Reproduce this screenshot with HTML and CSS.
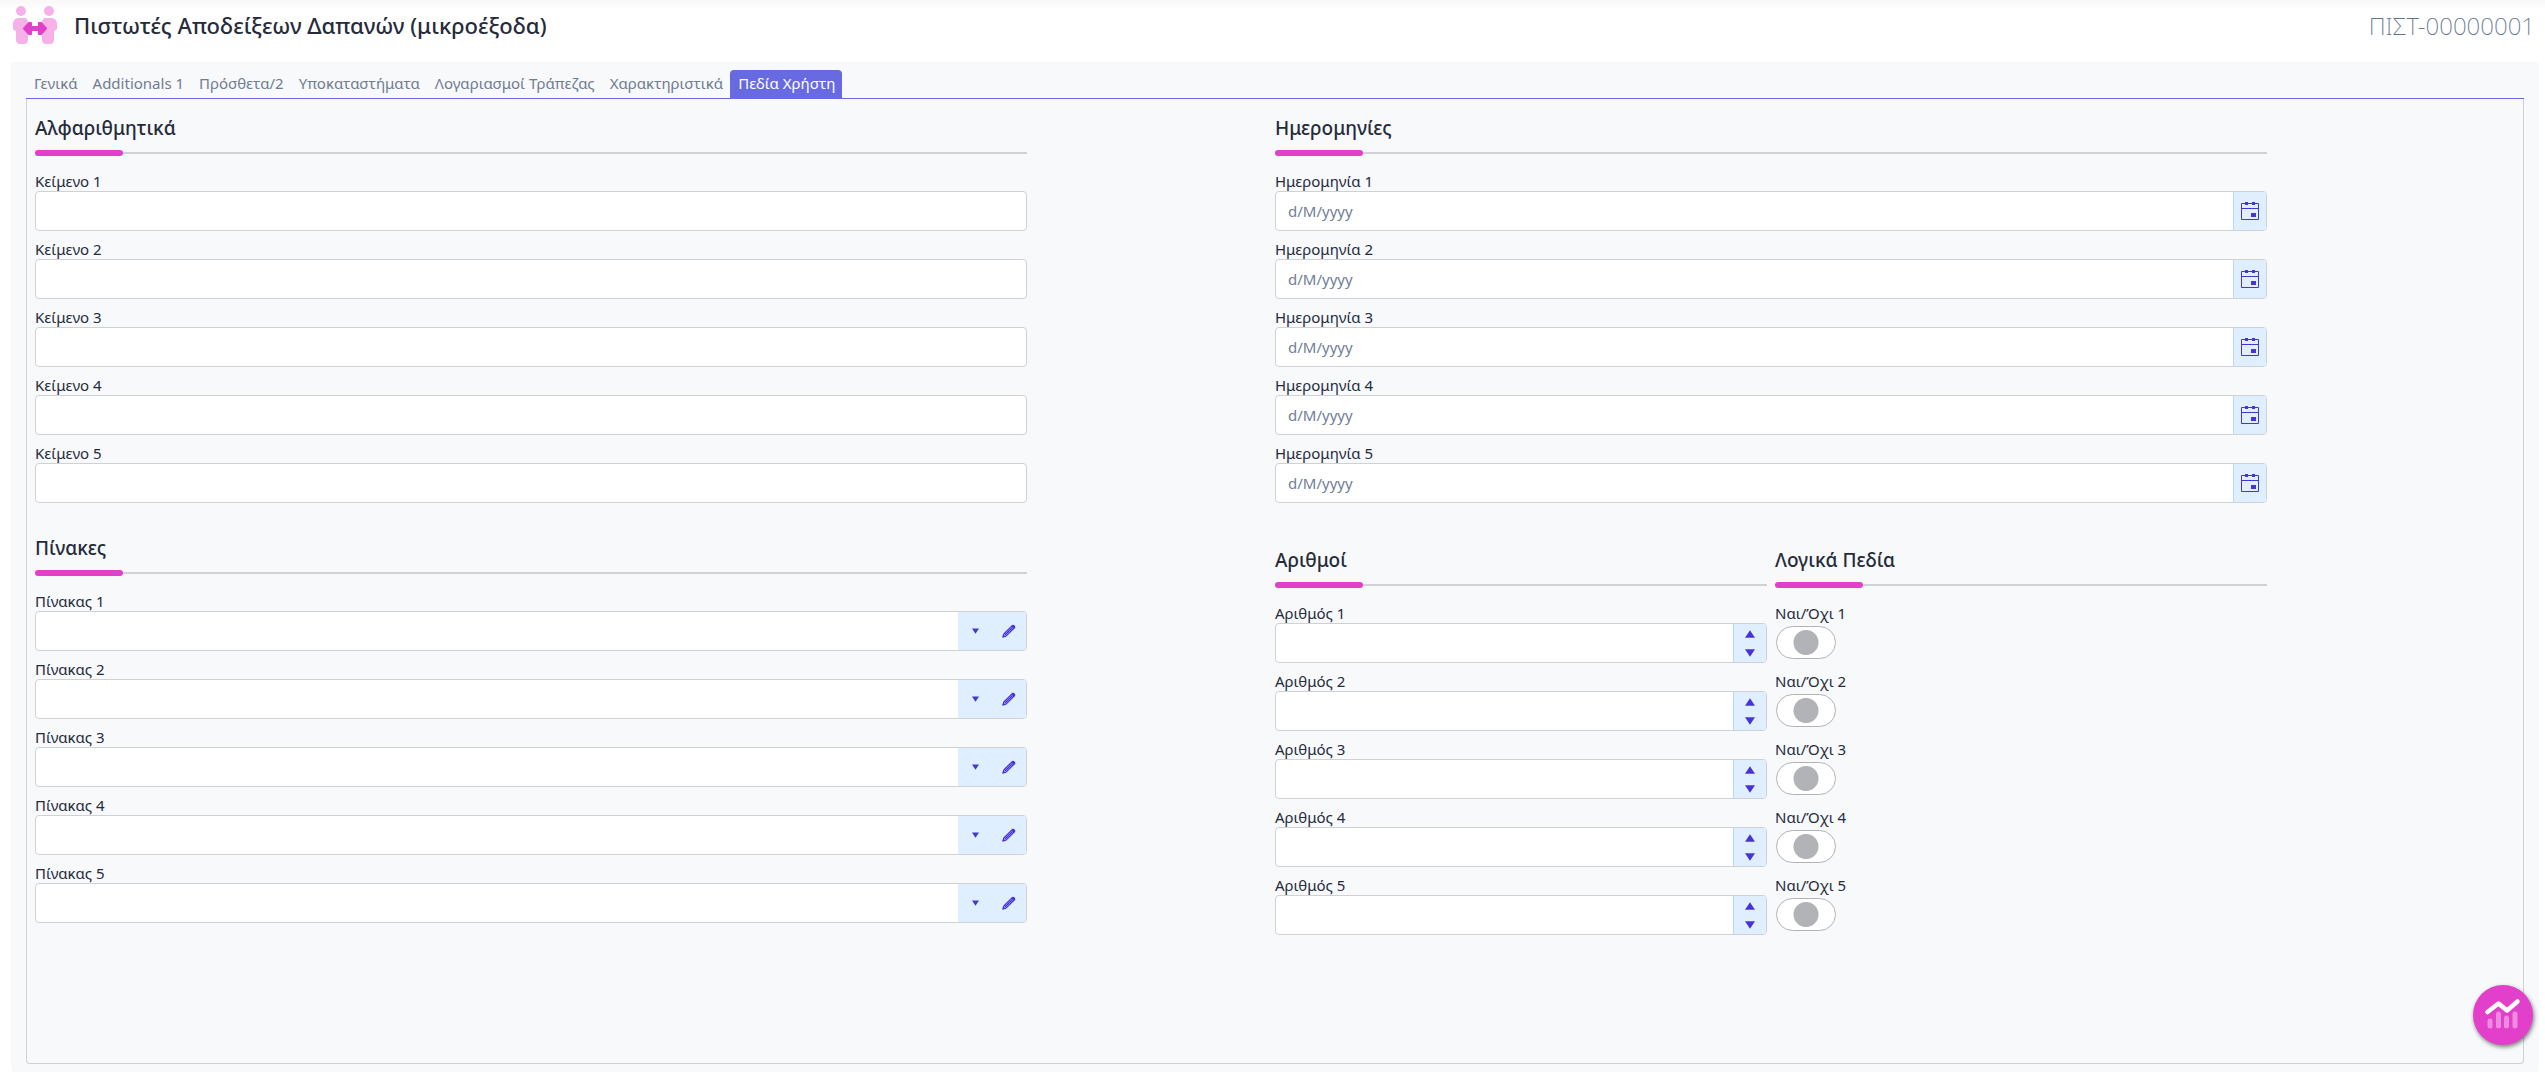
FILE: index.html
```html
<!DOCTYPE html>
<html lang="el">
<head>
    <meta charset="UTF-8">
    <meta name="viewport" content="width=device-width, initial-scale=1.0">
    <title>Πιστωτές Αποδείξεων Δαπανών</title>
    <link rel="stylesheet" href="styles.css">
</head>
<body>
    <svg class="sprite" aria-hidden="true">
        <symbol id="icon-calendar" viewBox="0 0 20 20">
            <path fill="none" stroke="currentColor" stroke-linejoin="round" d="M1.500 2.500h17v16h-17zM1.500 7.500h17"/>
            <path fill="currentColor" d="M5 1h3v3H5zM12 1h3v3h-3zM11 12h5v4h-5z"/>
        </symbol>
        <symbol id="icon-caret" viewBox="0 0 8 6">
            <path fill="currentColor" d="M0 0h8L4 6z"/>
        </symbol>
        <symbol id="icon-pencil" viewBox="0 0 14 14">
            <path fill="none" stroke="currentColor" stroke-width="1.200" stroke-linejoin="round" d="M1 13l.8-3L10.500 1.300l2.200 2.200L4 12.200zM3 11l7.500-7.500"/>
            <path fill="currentColor" d="M.5 13.500L1.200 10.200 3.800 12.800zM9.300 2.500L10.800 1a1 1 0 0 1 1.300 0l.9.9a1 1 0 0 1 0 1.300L11.500 4.700z"/>
        </symbol>
    </svg>

    <header class="header">
        <svg class="logo" viewBox="0 0 46 42" aria-hidden="true">
            <g fill="#f5b1e8">
                <circle cx="9" cy="6" r="5"/>
                <circle cx="37" cy="6" r="5"/>
                <path d="M7 13h5c3 0 4 2 4 5v17a4 4 0 0 1-4 4H8a4 4 0 0 1-4-4v-9c-3-1-3-2-3-4v-3c0-4 3-6 6-6z"/>
                <path d="M39 13h-5c-3 0-4 2-4 5v17a4 4 0 0 0 4 4h4a4 4 0 0 0 4-4v-9c3-1 3-2 3-4v-3c0-4-3-6-6-6z"/>
            </g>
            <path fill="#e23fcb" stroke="#e23fcb" stroke-width="2" stroke-linejoin="round" d="M12 23.500l5-5.500h2v4h8v-4h2l5 5.500-5 5.500h-2v-4h-8v4h-2z"/>
        </svg>
        <h1 class="title">Πιστωτές Αποδείξεων Δαπανών (μικροέξοδα)</h1>
        <span class="code">ΠΙΣΤ-00000001</span>
    </header>

    <main class="card">
        <nav class="tabs">
            <a class="tab" href="#">Γενικά</a>
            <a class="tab" href="#">Additionals 1</a>
            <a class="tab" href="#">Πρόσθετα/2</a>
            <a class="tab" href="#">Υποκαταστήματα</a>
            <a class="tab" href="#">Λογαριασμοί Τράπεζας</a>
            <a class="tab" href="#">Χαρακτηριστικά</a>
            <a class="tab active" href="#" aria-current="page">Πεδία Χρήστη</a>
        </nav>

        <div class="panel">
            <div class="column">
                <section>
                    <h2 class="heading">Αλφαριθμητικά</h2>
                    <div class="fields" data-type="text" data-label="Κείμενο"></div>
                </section>
                <section>
                    <h2 class="heading">Πίνακες</h2>
                    <div class="fields" data-type="combo" data-label="Πίνακας"></div>
                </section>
            </div>

            <div class="column column-wide">
                <section>
                    <h2 class="heading">Ημερομηνίες</h2>
                    <div class="fields" data-type="date" data-label="Ημερομηνία"></div>
                </section>
                <div class="split">
                    <section>
                        <h2 class="heading">Αριθμοί</h2>
                        <div class="fields" data-type="number" data-label="Αριθμός"></div>
                    </section>
                    <section>
                        <h2 class="heading">Λογικά Πεδία</h2>
                        <div class="fields" data-type="toggle" data-label="Ναι/Όχι"></div>
                    </section>
                </div>
            </div>
        </div>
    </main>

    <button class="fab" type="button" aria-label="Στατιστικά">
        <svg viewBox="0 0 60 60" aria-hidden="true">
            <g stroke="#f08be2" stroke-width="5" stroke-linecap="round">
                <path d="M17 36v5M25.500 29v12M33.500 33v8M42 29v12"/>
            </g>
            <path fill="none" stroke="#fff" stroke-width="4.500" stroke-linecap="round" stroke-linejoin="round" d="M14.500 27L25.500 18.500 34 25.500 44.500 16.500"/>
        </svg>
    </button>

    <script src="script.js"></script>
</body>
</html>
```
FILE: styles.css
```css
* {
    margin: 0;
    padding: 0;
    box-sizing: border-box;
}

body {
    display: flex;
    flex-direction: column;
    min-height: 100vh;
    padding: 0 6px 8px 11px;
    background: linear-gradient(#f8f8f8, #fff 10px) no-repeat #fff;
    color: #252b3b;
    font-family: 'Noto Sans', sans-serif;
    font-size: 15px;
}

input,
button {
    border: none;
    font: inherit;
    color: inherit;
}

button {
    cursor: pointer;
}

.sprite {
    display: none;
}

/* Header */
.header {
    display: flex;
    align-items: center;
    height: 62px;
    padding: 0 4px 10px 1px;
}

.logo {
    width: 46px;
    height: 42px;
}

.title,
.code {
    padding-bottom: 2px;
}

.title {
    margin-left: 16px;
    font-size: 22px;
    font-weight: 500;
}

.code {
    margin-left: auto;
    color: #64748b;
    font-size: 24px;
    font-weight: 200;
}

/* Tabs */
.card {
    display: flex;
    flex-direction: column;
    flex: 1;
    padding: 8px 15px 8px 15px;
    border-radius: 4px;
    background: #f8f9fb;
}

.tabs {
    display: flex;
    border-bottom: 1px solid #676ae0;
}

.tab {
    padding: 0 7px 2px 8px;
    border-radius: 4px 4px 0 0;
    color: #6f7c92;
    line-height: 26px;
    text-decoration: none;
}

.tab.active {
    background: #676ae0;
    color: #fff;
}

/* Form */
.panel {
    display: grid;
    grid-template-columns: 1fr 1fr;
    flex: 1;
    padding: 16px 8px;
    border: 1px solid #d0d1d4;
    border-top: none;
    border-radius: 0 0 4px 4px;
}

.column {
    display: flex;
    flex-direction: column;
    gap: 32px;
    width: 80%;
}

.column-wide {
    gap: 44px;
}

.split {
    display: grid;
    grid-template-columns: 1fr 1fr;
    gap: 8px;
}

.heading {
    position: relative;
    height: 39px;
    margin-bottom: 17px;
    border-bottom: 2px solid #d0d1d4;
    font-size: 19px;
    font-weight: 500;
    line-height: 26px;
}

.heading::after {
    content: '';
    position: absolute;
    left: 0;
    bottom: -4px;
    width: 88px;
    height: 6px;
    border-radius: 3px;
    background: #e23fcb;
}

.fields {
    display: grid;
    gap: 8px;
}

.field label {
    display: block;
    height: 20px;
    line-height: 20px;
}

.control {
    display: flex;
    height: 40px;
    border: 1px solid #d0d1d4;
    border-radius: 4px;
    background: #fff;
    overflow: hidden;
}

.control input {
    flex: 1;
    min-width: 0;
    padding: 0 12px;
    background: none;
    outline: none;
    appearance: none;
}

.control input::placeholder {
    color: #718096;
    opacity: 1;
}

.control button {
    display: flex;
    align-items: center;
    justify-content: center;
    width: 34px;
    background: #e0efff;
    color: #4834d4;
}

.control .date-button {
    width: 33px;
    border-left: 1px solid #b5d9fb;
}

.date-button svg {
    width: 20px;
    height: 20px;
}

.caret {
    width: 7px;
    height: 6px;
}

.pencil {
    width: 14px;
    height: 14px;
}

.spinner {
    display: flex;
    flex-direction: column;
    width: 33px;
    border-left: 1px solid #b5d9fb;
    background: #e0efff;
}

.spinner button {
    flex: 1;
    width: 100%;
}

.spinner svg {
    width: 10px;
    height: 8px;
}

.spinner .up svg {
    transform: rotate(180deg);
}

.toggle {
    display: block;
    width: 60px;
    height: 33px;
    margin: 3px 0 4px 1px;
    border: 1px solid #b2b3b6;
    border-radius: 17px;
    background: radial-gradient(circle, #b2b3b6 12px, #fff 13px);
    appearance: none;
}

/* Floating button */
.fab {
    position: fixed;
    right: 12px;
    bottom: 35px;
    width: 60px;
    height: 60px;
    border-radius: 50%;
    background: #e23fcb;
    box-shadow: 1px 2px 4px rgba(0, 0, 0, 0.5);
}

.fab svg {
    display: block;
}
```
FILE: script.js
```js
const controls = {
    text: id => `<div class="control"><input type="text" id="${id}"></div>`,
    date: id => `
        <div class="control">
            <input type="text" id="${id}" placeholder="d/M/yyyy">
            <button class="date-button" type="button" aria-label="Ημερολόγιο"><svg><use href="#icon-calendar"/></svg></button>
        </div>`,
    combo: id => `
        <div class="control">
            <input type="text" role="combobox" aria-expanded="false" id="${id}">
            <button type="button" aria-label="Άνοιγμα"><svg class="caret"><use href="#icon-caret"/></svg></button>
            <button type="button" aria-label="Επεξεργασία"><svg class="pencil"><use href="#icon-pencil"/></svg></button>
        </div>`,
    number: id => `
        <div class="control">
            <input type="text" inputmode="decimal" id="${id}">
            <div class="spinner">
                <button class="up" type="button" aria-label="Αύξηση"><svg><use href="#icon-caret"/></svg></button>
                <button type="button" aria-label="Μείωση"><svg><use href="#icon-caret"/></svg></button>
            </div>
        </div>`,
    toggle: id => `<input class="toggle" type="checkbox" id="${id}">`
};

// Every group has five numbered fields
document.querySelectorAll('.fields').forEach(group => {
    const { type, label } = group.dataset;
    for (let i = 1; i <= 5; i++) {
        const id = `${type}-${i}`;
        group.innerHTML += `
            <div class="field">
                <label for="${id}">${label} ${i}</label>
                ${controls[type](id)}
            </div>`;
    }
});
```
